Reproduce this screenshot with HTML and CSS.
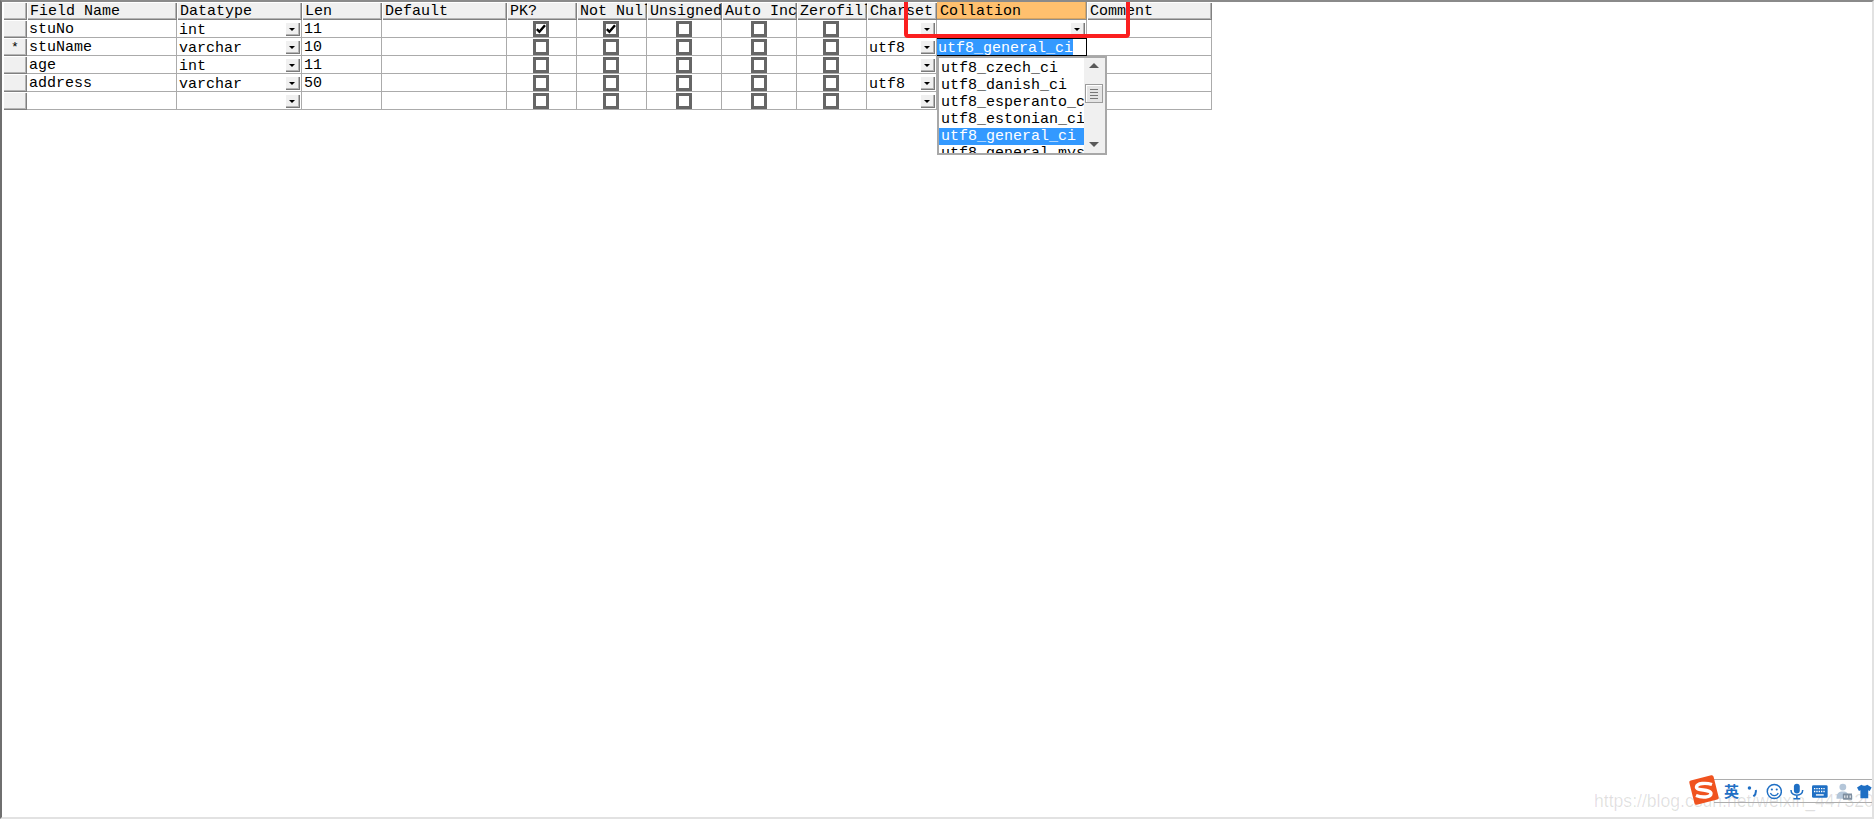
FILE: index.html
```html
<!DOCTYPE html>
<html lang="en">
<head>
  <meta charset="UTF-8" />
  <title>Table designer</title>
  <link rel="stylesheet" href="styles.css">
</head>
<body>
  <div class="window">
    <svg width="0" height="0" class="defs">
      <symbol id="tick" viewBox="0 0 10 10"><path d="M0.8 5.2 L3.4 7.8 L9 1.2" fill="none" stroke="#000" stroke-width="2.4"/></symbol>
    </svg>

    <div class="grid">
      <!-- header -->
      <div class="head"></div>
      <div class="head">Field Name</div>
      <div class="head">Datatype</div>
      <div class="head">Len</div>
      <div class="head">Default</div>
      <div class="head">PK?</div>
      <div class="head">Not Null</div>
      <div class="head">Unsigned</div>
      <div class="head">Auto Inc</div>
      <div class="head">Zerofill</div>
      <div class="head">Charset</div>
      <div class="head active">Collation</div>
      <div class="head">Comment</div>

      <!-- stuNo -->
      <div class="mark"></div>
      <div class="cell">stuNo</div>
      <div class="cell combo"><span>int</span><i class="drop"></i></div>
      <div class="cell">11</div>
      <div class="cell"></div>
      <div class="cell check"><span class="box"><svg><use href="#tick"/></svg></span></div>
      <div class="cell check"><span class="box"><svg><use href="#tick"/></svg></span></div>
      <div class="cell check"><span class="box"></span></div>
      <div class="cell check"><span class="box"></span></div>
      <div class="cell check"><span class="box"></span></div>
      <div class="cell combo"><span></span><i class="drop"></i></div>
      <div class="cell combo"><span></span><i class="drop"></i></div>
      <div class="cell"></div>

      <!-- stuName -->
      <div class="mark">*</div>
      <div class="cell">stuName</div>
      <div class="cell combo"><span>varchar</span><i class="drop"></i></div>
      <div class="cell">10</div>
      <div class="cell"></div>
      <div class="cell check"><span class="box"></span></div>
      <div class="cell check"><span class="box"></span></div>
      <div class="cell check"><span class="box"></span></div>
      <div class="cell check"><span class="box"></span></div>
      <div class="cell check"><span class="box"></span></div>
      <div class="cell combo"><span>utf8</span><i class="drop"></i></div>
      <div class="cell editing"><span class="picked">utf8_general_ci</span></div>
      <div class="cell"></div>

      <!-- age -->
      <div class="mark"></div>
      <div class="cell">age</div>
      <div class="cell combo"><span>int</span><i class="drop"></i></div>
      <div class="cell">11</div>
      <div class="cell"></div>
      <div class="cell check"><span class="box"></span></div>
      <div class="cell check"><span class="box"></span></div>
      <div class="cell check"><span class="box"></span></div>
      <div class="cell check"><span class="box"></span></div>
      <div class="cell check"><span class="box"></span></div>
      <div class="cell combo"><span></span><i class="drop"></i></div>
      <div class="cell"></div>
      <div class="cell"></div>

      <!-- address -->
      <div class="mark"></div>
      <div class="cell">address</div>
      <div class="cell combo"><span>varchar</span><i class="drop"></i></div>
      <div class="cell">50</div>
      <div class="cell"></div>
      <div class="cell check"><span class="box"></span></div>
      <div class="cell check"><span class="box"></span></div>
      <div class="cell check"><span class="box"></span></div>
      <div class="cell check"><span class="box"></span></div>
      <div class="cell check"><span class="box"></span></div>
      <div class="cell combo"><span>utf8</span><i class="drop"></i></div>
      <div class="cell"></div>
      <div class="cell"></div>

      <!-- empty row -->
      <div class="mark"></div>
      <div class="cell"></div>
      <div class="cell combo"><span></span><i class="drop"></i></div>
      <div class="cell"></div>
      <div class="cell"></div>
      <div class="cell check"><span class="box"></span></div>
      <div class="cell check"><span class="box"></span></div>
      <div class="cell check"><span class="box"></span></div>
      <div class="cell check"><span class="box"></span></div>
      <div class="cell check"><span class="box"></span></div>
      <div class="cell combo"><span></span><i class="drop"></i></div>
      <div class="cell"></div>
      <div class="cell"></div>
    </div>

    <!-- Collation dropdown -->
    <div class="popup">
      <ul class="options">
        <li>utf8_czech_ci</li>
        <li>utf8_danish_ci</li>
        <li>utf8_esperanto_ci</li>
        <li>utf8_estonian_ci</li>
        <li class="selected">utf8_general_ci</li>
        <li>utf8_general_mysql500_ci</li>
      </ul>
      <div class="scrollbar">
        <i class="arrow up"></i>
        <div class="thumb"><b></b><b></b><b></b><b></b></div>
        <i class="arrow down"></i>
      </div>
    </div>

    <div class="redframe"></div>

    <div class="watermark">https://blog.csdn.net/weixin_44732099</div>

    <!-- IME bar -->
    <div class="ime">
      <svg class="logo" width="34" height="34" viewBox="0 0 34 34">
        <rect x="4.5" y="4.5" width="25" height="25" rx="2" fill="#f0531f" transform="rotate(-14 17 17)"/>
        <path d="M25 11.5 C19 9.5 10 10 9.5 14 C9 18 24 16 24 20.5 C24 24.5 15 25 9 22.5" fill="none" stroke="#fff" stroke-width="3.4"/>
      </svg>
      <span class="ying">英</span>
      <svg width="11" height="12" viewBox="0 0 11 12"><circle cx="2.5" cy="3" r="1.8" fill="#1f6fc4"/><path d="M9 5 C9.5 8 8.5 10 6.5 11.5" fill="none" stroke="#1f6fc4" stroke-width="2"/></svg>
      <svg width="17" height="17" viewBox="0 0 17 17"><circle cx="8.5" cy="8.5" r="7.2" fill="none" stroke="#1f6fc4" stroke-width="1.5"/><circle cx="6" cy="6.5" r="1.1" fill="#1f6fc4"/><circle cx="11" cy="6.5" r="1.1" fill="#1f6fc4"/><path d="M4.5 10 C6 13.5 11 13.5 12.5 10" fill="none" stroke="#1f6fc4" stroke-width="1.3"/></svg>
      <svg width="14" height="17" viewBox="0 0 14 17"><rect x="4" y="0.5" width="6" height="10" rx="3" fill="#1f6fc4"/><path d="M1 7 C1 14 13 14 13 7 M7 12 V16 M3.5 16 H10.5" fill="none" stroke="#1f6fc4" stroke-width="1.6"/></svg>
      <svg width="16" height="13" viewBox="0 0 16 13"><rect width="16" height="13" rx="1.5" fill="#1f6fc4"/><path d="M2 3.5 H14 M2 6.5 H14" stroke="#fff" stroke-width="1.3" stroke-dasharray="1.4 1"/><path d="M4 10 H12" stroke="#fff" stroke-width="1.4"/></svg>
      <svg width="17" height="17" viewBox="0 0 17 17"><circle cx="7" cy="4" r="3.5" fill="#b4c6d9"/><path d="M0.5 16 C0.5 10 3 8.5 7 8.5 C11 8.5 13 10 13 16 Z" fill="#b4c6d9"/><rect x="7" y="10.5" width="10" height="6.5" rx="1" fill="#7f8fa0"/><path d="M9 12.5 V15 M11.5 12.5 V15 M14.5 12.5 V15" stroke="#fff" stroke-width="1"/></svg>
      <svg class="shirt" width="15" height="15" viewBox="0 0 15 15"><path d="M4.5 0.5 C6 2 9 2 10.5 0.5 L15 3.5 L13 7 L11.5 6.2 V14.5 H3.5 V6.2 L2 7 L0 3.5 Z" fill="#1f6fc4"/></svg>
    </div>
  </div>
</body>
</html>
```

FILE: styles.css
```css
* {
  box-sizing: border-box;
}
body {
  margin: 0;
  background: #fff;
  font-family: 'Liberation Mono', 'Courier New', monospace;
  font-size: 15px;
  color: #000;
}
.window {
  position: relative;
  width: 1874px;
  height: 819px;
  overflow: hidden;
  border-top: 2px solid #8a8a8a;
  border-left: 2px solid #6f6f6f;
  border-right: 2px solid #e2e2e2;
  border-bottom: 2px solid #e2e2e2;
}
.defs {
  position: absolute;
}

/* Grid */
.grid {
  display: grid;
  grid-template-columns: 24px 150px 125px 80px 125px 70px 70px 75px 75px 70px 70px 150px 125px;
  grid-auto-rows: 18px;
  width: 1209px;
  margin-left: 1px;
}
.head {
  padding: 0 0 0 3px;
  line-height: 20px;
  background: #f0f0f0;
  white-space: nowrap;
  overflow: hidden;
  box-shadow: inset 1px 1px 0 #fff, inset -1px -1px 0 #808080, inset -2px -2px 0 #b5b5b5;
}
.head.active {
  background: #ffc06e;
  box-shadow: inset -1px -1px 0 #8f8f8f, inset -2px -2px 0 #d9a560;
}
.mark {
  background: #f0f0f0;
  box-shadow: inset 1px 1px 0 #fff, inset -1px -1px 0 #808080, inset -2px -2px 0 #b5b5b5;
  text-align: center;
  line-height: 20px;
  font-size: 13px;
}
.cell {
  border-right: 1px solid #ababab;
  border-bottom: 1px solid #ababab;
  padding: 2px 0 0 2px;
  line-height: 15px;
  white-space: nowrap;
  overflow: hidden;
}
.combo {
  display: flex;
  justify-content: space-between;
  align-items: flex-start;
  padding: 0 1px 0 2px;
}
.combo span {
  padding-top: 3px;
}
.drop {
  position: relative;
  flex: none;
  width: 15px;
  height: 14px;
  margin-top: 2px;
  background: #f0f0f0;
  box-shadow: inset 1px 1px 0 #fff, inset -1px -1px 0 #7a7a7a, inset -2px -2px 0 #b5b5b5;
}
.drop::after {
  content: "";
  position: absolute;
  left: 4px;
  top: 6px;
  border: 3px solid transparent;
  border-top: 3px solid #000;
  border-bottom: 0;
}
.check {
  display: flex;
  justify-content: center;
  padding: 0 1px 0 0;
}
.box {
  display: block;
  width: 16px;
  height: 16px;
  margin-top: 1px;
  border: 3px solid #666;
  background: #fff;
}
.box svg {
  display: block;
  width: 10px;
  height: 10px;
}
.editing {
  padding: 0;
  border: 1px solid #000;
  border-left: 0;
}
.picked {
  display: block;
  width: 136px;
  height: 16px;
  padding-left: 1px;
  line-height: 19px;
  overflow: hidden;
  background: #3399ff;
  color: #fff;
}

/* Collation dropdown */
.popup {
  position: absolute;
  left: 935px;
  top: 54px;
  width: 170px;
  height: 99px;
  display: flex;
  overflow: hidden;
  background: #fff;
  border: 2px solid #a8a8a8;
}
.options {
  list-style: none;
  margin: 0;
  padding: 2px 0 0 0;
  width: 145px;
  overflow: hidden;
  flex: none;
}
.options li {
  height: 17px;
  padding-left: 2px;
  line-height: 17px;
  white-space: nowrap;
}
.options .selected {
  background: #3399ff;
  color: #fff;
}
.scrollbar {
  position: relative;
  flex: 1;
  background: #f0f0f0;
}
.arrow {
  position: absolute;
  left: 5px;
  border: 5px solid transparent;
}
.arrow.up {
  top: 5px;
  border-top: 0;
  border-bottom-color: #5a5a5a;
}
.arrow.down {
  bottom: 6px;
  border-bottom: 0;
  border-top-color: #5a5a5a;
}
.thumb {
  position: absolute;
  left: 1px;
  top: 26px;
  width: 18px;
  height: 19px;
  display: flex;
  flex-direction: column;
  justify-content: center;
  gap: 2px;
  padding: 0 4px;
  background: #e4e4e4;
  border: 1px solid #9c9c9c;
  box-shadow: inset 1px 1px 0 #fff;
}
.thumb b {
  height: 1px;
  background: #777;
}

.redframe {
  position: absolute;
  left: 902px;
  top: -5px;
  width: 226px;
  height: 41px;
  border: 4px solid #fb1f1f;
  border-radius: 4px;
}

/* IME bar */
.ime {
  position: absolute;
  right: 0;
  bottom: 14px;
  width: 158px;
  height: 24px;
  display: flex;
  align-items: center;
  gap: 8px;
  padding-left: 10px;
  border-top: 1px solid #adadad;
  border-bottom: 1px solid #adadad;
}
.logo {
  position: absolute;
  left: -27px;
  top: -7px;
}
.ying {
  font-family: 'Noto Sans CJK SC', sans-serif;
  font-size: 15px;
  line-height: 18px;
  font-weight: 700;
  color: #1f6fc4;
}
.shirt {
  margin-left: -3px;
}
.watermark {
  position: absolute;
  left: 1592px;
  top: 789px;
  font-family: 'Liberation Sans', sans-serif;
  font-size: 17.6px;
  line-height: 20px;
  color: rgba(0, 0, 0, 0.12);
  white-space: nowrap;
}
```
